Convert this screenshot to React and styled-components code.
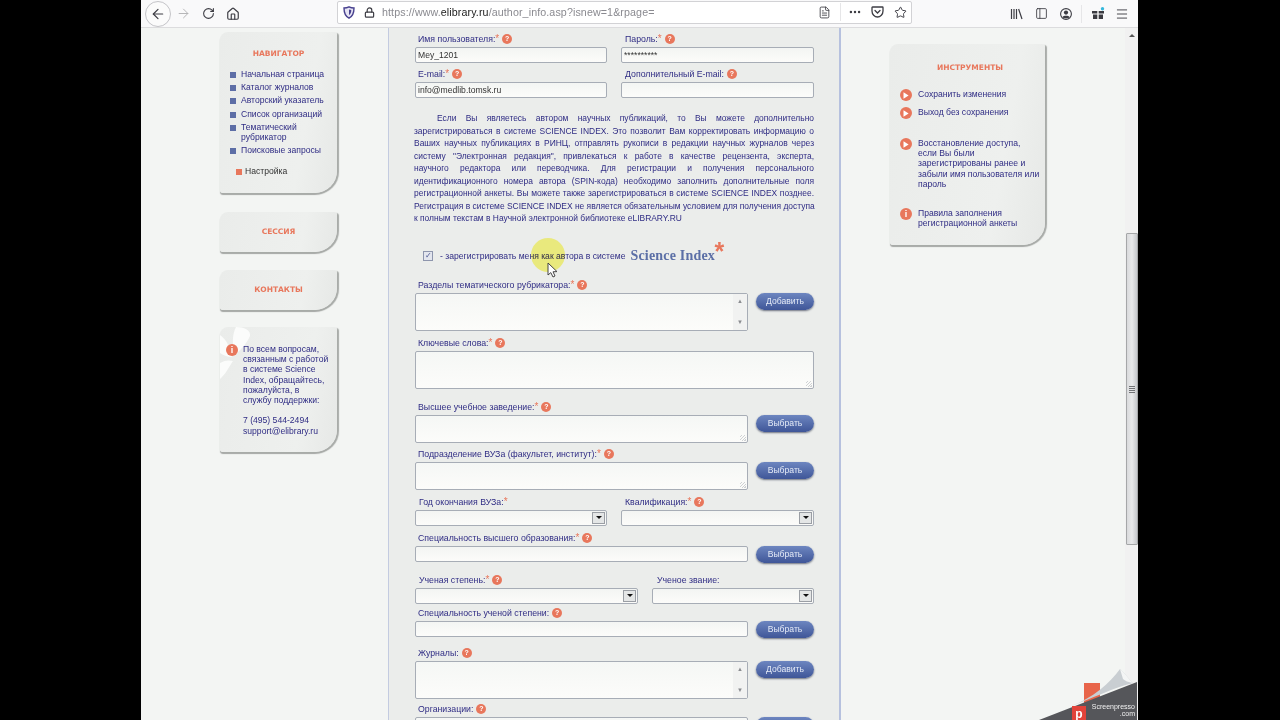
import React from 'react';
import styled, { createGlobalStyle } from 'styled-components';
import { ArrowLeft, ArrowRight, RotateCw, House, Lock, FileText, Ellipsis, Star, PanelLeft, Menu } from 'lucide-react';

const GlobalStyle = createGlobalStyle`
    html, body {
        margin: 0;
        padding: 0;
        background: #000;
        overflow: hidden;
    }
    * {
        box-sizing: border-box;
    }
`;

const NAVY = '#2f2c84';
const CORAL = '#e8775c';

const Screen = styled.div`
    width: 1280px;
    height: 720px;
    overflow: hidden;
    background: #000;
    padding: 0 142px 0 141px;
    font-family: "Liberation Sans", Arial, sans-serif;
`;

const Browser = styled.div`
    position: relative;
    width: 997px;
    height: 720px;
    display: flex;
    flex-direction: column;
    background: #f3f5f3;
    filter: blur(0.3px);
`;

/* browser chrome */
const Toolbar = styled.div`
    height: 28px;
    flex: none;
    display: flex;
    align-items: center;
    background: #f9f9fa;
    border-bottom: 1px solid #dcdcde;
    color: #3d3d44;
`;

const BackButton = styled.div`
    width: 26px;
    height: 26px;
    margin-left: 4px;
    flex: none;
    display: flex;
    align-items: center;
    justify-content: center;
    border: 1px solid #c4c4c8;
    border-radius: 50%;
    background: #fbfbfb;
`;

const ToolIcon = styled.div`
    width: ${p => p.$w || 24}px;
    margin-left: ${p => p.$ml || 0}px;
    flex: none;
    display: flex;
    align-items: center;
    justify-content: center;
    color: ${p => p.$color || 'inherit'};
`;

const UrlBar = styled.div`
    width: 575px;
    height: 23px;
    margin-left: 92px;
    margin-top: -3px;
    flex: none;
    display: flex;
    align-items: center;
    background: #fff;
    border: 1px solid #d2d2d5;
    border-radius: 2px;
`;

const UrlText = styled.div`
    width: 430px;
    flex: none;
    padding-left: 2px;
    font-size: 10.7px;
    color: #8a8a90;
    letter-spacing: 0.1px;
    white-space: nowrap;

    b {
        font-weight: 400;
        color: #222;
    }
`;

const ToolSep = styled.div`
    width: 1px;
    height: 18px;
    flex: none;
    margin-left: ${p => p.$ml || 0}px;
    background: #e6e6e8;
`;

/* page */
const Viewport = styled.div`
    flex: 1;
    min-height: 0;
    display: flex;
`;

const Page = styled.div`
    flex: 1;
    min-width: 0;
    display: flex;
    padding-left: 79px;
    overflow: hidden;
`;

const LeftCol = styled.div`
    width: 117px;
    flex: none;
    padding-top: 4px;
    display: flex;
    flex-direction: column;
`;

const RightCol = styled.div`
    width: 155px;
    flex: none;
    margin-left: 49px;
    padding-top: 16px;
`;

const Panel = styled.div`
    position: relative;
    overflow: hidden;
    height: ${p => p.$h}px;
    margin-top: ${p => p.$mt || 0}px;
    padding: ${p => p.$pad || '0'};
    background: linear-gradient(100deg, #eaecea 0%, #eef0ee 70%, #e6e8e6 100%);
    border-radius: 8px 3px 22px 3px;
    box-shadow: 2px 1px 1px #a9aca9, 0 2px 1px #a5a8a5;
    color: ${NAVY};
    font-size: 8.6px;
    line-height: 10.2px;
`;

const PanelTitle = styled.div`
    height: ${p => p.$h || 12}px;
    line-height: ${p => p.$h || 12}px;
    text-align: center;
    font-family: "DejaVu Sans", Verdana, sans-serif;
    font-size: 7.5px;
    font-weight: 700;
    color: ${CORAL};
`;

const NavList = styled.ul`
    list-style: none;
    margin: 9px 0 0;
    padding: 0 0 0 10px;
`;

const NavItem = styled.li`
    display: flex;
    margin-top: ${p => p.$mt ?? 3}px;
    padding-left: ${p => p.$indent || 0}px;
    color: ${p => p.$dark ? '#333' : NAVY};
`;

const NavBullet = styled.span`
    width: 6px;
    height: 6px;
    flex: none;
    margin: 3px ${p => p.$gap || 5}px 0 0;
    background: ${p => p.$red ? CORAL : '#5d6ea6'};
`;

const InfoBlock = styled.div`
    position: relative;
    display: flex;
    gap: ${p => p.$gap || 5}px;
    margin-top: ${p => p.$mt || 0}px;
`;

const InfoText = styled.div`
    min-width: 0;
`;

const Round = styled.span`
    width: 12px;
    height: 12px;
    flex: none;
    display: flex;
    align-items: center;
    justify-content: center;
    border-radius: 50%;
    background: ${CORAL};
    color: #fff;
    font-family: "Liberation Sans", Arial, sans-serif;
    font-size: 9px;
    font-weight: 700;
    line-height: 12px;
`;

const Petals = styled.svg`
    position: absolute;
    left: 0;
    top: 0;
`;

/* central form */
const Center = styled.div`
    width: 453px;
    flex: none;
    margin-left: 51px;
    padding: 4px 26px 0 26px;
    background: #ebedeb;
    border-left: 1px solid #c3cbe0;
    border-right: 2px solid #b6c1de;
`;

const Row = styled.div`
    display: flex;
    gap: ${p => p.$gap ?? 14}px;
    margin-top: ${p => p.$mt || 0}px;
`;

const Field = styled.div`
    width: ${p => p.$w ? `${p.$w}px` : 'auto'};
    flex: none;
`;

const Label = styled.div`
    height: 12px;
    margin-bottom: 2px;
    padding-left: ${p => p.$pl ?? 3}px;
    display: flex;
    align-items: center;
    gap: 3px;
    white-space: nowrap;
    font-size: 8.75px;
    line-height: 12px;
    color: ${NAVY};

    i {
        font-style: normal;
        font-size: 10px;
        color: ${CORAL};
        margin-left: -3px;
    }
`;

const Hint = styled.span`
    width: 10px;
    height: 10px;
    flex: none;
    display: flex;
    align-items: center;
    justify-content: center;
    border-radius: 50%;
    background: ${CORAL};
    color: #fff;
    font-size: 7px;
    font-weight: 700;
`;

const TextInput = styled.input`
    display: block;
    width: 100%;
    height: 16px;
    margin: 0;
    padding: 0 2px;
    border: 1px solid #a7adb6;
    border-radius: 2px;
    background: linear-gradient(#f3f5f3, #fcfcfa);
    font-family: "Liberation Sans", Arial, sans-serif;
    font-size: 8.6px;
    color: #333;
    outline: none;
`;

const TextArea = styled.textarea`
    display: block;
    width: 100%;
    height: ${p => p.$h}px;
    margin: 0;
    padding: 2px;
    border: 1px solid #a7adb6;
    border-radius: 2px;
    background: linear-gradient(#f5f7f5, #fcfcfa);
    outline: none;
    resize: none;
`;

const Grip = styled.span`
    position: absolute;
    right: 2px;
    bottom: 2px;
    width: 6px;
    height: 6px;
    background: repeating-linear-gradient(135deg, transparent 0 1px, #cfd2d4 1px 2px);
`;

const AreaWrap = styled.div`
    position: relative;
`;

const ListBox = styled.div`
    height: 38px;
    display: flex;
    justify-content: flex-end;
    border: 1px solid #a7adb6;
    border-radius: 2px;
    background: linear-gradient(#f5f7f5, #fcfcfa);
`;

const ListArrows = styled.div`
    width: 14px;
    padding: 4px 0;
    display: flex;
    flex-direction: column;
    justify-content: space-between;
    align-items: center;
    background: #f1f2f1;
    color: #8a8c90;
    font-size: 6px;
    line-height: 7px;
`;

const SelectBox = styled.div`
    height: 16px;
    padding: 1px;
    display: flex;
    justify-content: flex-end;
    border: 1px solid #a7adb6;
    border-radius: 2px;
    background: linear-gradient(#f3f5f3, #fcfcfa);
`;

const SelectArrow = styled.div`
    width: 13px;
    display: flex;
    align-items: center;
    justify-content: center;
    background: #e4e6e6;
    border: 1px solid #9a9ea4;

    &::after {
        content: '';
        border-style: solid;
        border-width: 3px 3px 0 3px;
        border-color: #111 transparent transparent transparent;
    }
`;

const ActionButton = styled.div`
    width: 58px;
    height: ${p => p.$h || 17}px;
    flex: none;
    display: flex;
    align-items: center;
    justify-content: center;
    border-radius: 9px;
    background: linear-gradient(#6d86c0, #3f5698);
    box-shadow: 0 1px 2px #6d7380;
    color: #e3e9f6;
    font-size: 8.6px;
`;

const Intro = styled.div`
    width: 400px;
    margin: 14px 0 0 -1px;
    font-size: 8.45px;
    line-height: 12.5px;
    color: ${NAVY};
`;

const IntroLine = styled.div`
    white-space: nowrap;
    text-align: justify;
    text-align-last: justify;
    padding-left: ${p => p.$indent || 0}px;

    &:last-child {
        text-align-last: left;
    }
`;

const CheckRow = styled.div`
    height: 20px;
    margin: 21px 0 0 8px;
    display: flex;
    align-items: center;
    font-size: 8.6px;
    color: ${NAVY};
    white-space: nowrap;
`;

const CheckBox = styled.span`
    width: 10px;
    height: 10px;
    flex: none;
    margin-right: 7px;
    display: flex;
    align-items: center;
    justify-content: center;
    border: 1px solid #8e96ad;
    background: #e3e6ee;
    color: #4a5590;
    font-size: 8px;
    line-height: 8px;
`;

const ScienceIndex = styled.span`
    position: relative;
    margin-left: 5px;
    font-family: "Liberation Serif", "Times New Roman", serif;
    font-size: 14px;
    font-weight: 700;
    letter-spacing: 0.2px;
    color: #5b6fa6;
`;

const Star2 = styled.span`
    position: absolute;
    left: 84px;
    top: -9px;
    font-family: "Liberation Sans", Arial, sans-serif;
    font-size: 25px;
    line-height: 25px;
    font-weight: 700;
    color: ${CORAL};
`;

/* scrollbar */
const ScrollBar = styled.div`
    width: 13px;
    flex: none;
    display: flex;
    flex-direction: column;
    align-items: center;
    background: #f1f1f1;
    color: #555;
`;

const ScrollArrow = styled.div`
    width: 0;
    height: 0;
    margin-top: 6px;
    border-style: solid;
    border-width: 0 3px 3px 3px;
    border-color: transparent transparent #555 transparent;
`;

const ScrollThumb = styled.div`
    width: 12px;
    height: 312px;
    margin-top: 196px;
    display: flex;
    align-items: center;
    justify-content: center;
    border: 1px solid #a5a7a8;
    border-radius: 1px;
    background: linear-gradient(90deg, #d9dadc 0%, #e8e9ea 50%, #c6c8cb 100%);
`;

const ThumbGrip = styled.div`
    width: 6px;
    height: 7px;
    background: repeating-linear-gradient(#707275 0 1px, transparent 1px 2px);
`;

/* things recorded over the page */
const CursorGlow = styled.div`
    position: absolute;
    left: 390px;
    top: 238px;
    width: 34px;
    height: 34px;
    border-radius: 50%;
    background: radial-gradient(circle, #fdfb88 0 75%, #fdfbb4 100%);
    mix-blend-mode: multiply;
`;

const Cursor = styled.svg`
    position: absolute;
    left: 406px;
    top: 262px;
`;

const Watermark = styled.svg`
    position: absolute;
    right: 0;
    bottom: 0;
`;

const Question = () => <Hint>?</Hint>;

const Req = () => <i>*</i>;

const Play = () => (
    <Round>
        <svg width="6" height="7" viewBox="0 0 6 7"><path d="M0.5 0.3 L5.6 3.5 L0.5 6.7 Z" fill="#fff" /></svg>
    </Round>
);

const NAV_ITEMS = ['Начальная страница', 'Каталог журналов', 'Авторский указатель', 'Список организаций', 'Тематический рубрикатор', 'Поисковые запросы'];

const INTRO_LINES = [
    'Если Вы являетесь автором научных публикаций, то Вы можете дополнительно',
    'зарегистрироваться в системе SCIENCE INDEX. Это позволит Вам корректировать информацию о',
    'Ваших научных публикациях в РИНЦ, отправлять рукописи в редакции научных журналов через',
    'систему "Электронная редакция", привлекаться к работе в качестве рецензента, эксперта,',
    'научного редактора или переводчика. Для регистрации и получения персонального',
    'идентификационного номера автора (SPIN-кода) необходимо заполнить дополнительные поля',
    'регистрационной анкеты. Вы можете также зарегистрироваться в системе SCIENCE INDEX позднее.',
    'Регистрация в системе SCIENCE INDEX не является обязательным условием для получения доступа',
    'к полным текстам в Научной электронной библиотеке eLIBRARY.RU',
];

const ToolbarBar = () => (
    <Toolbar>
        <BackButton><ArrowLeft size={16} strokeWidth={1.8} /></BackButton>
        <ToolIcon $color="#b1b1b3"><ArrowRight size={15} strokeWidth={1.5} /></ToolIcon>
        <ToolIcon $w={26}><RotateCw size={13} strokeWidth={2} /></ToolIcon>
        <ToolIcon><House size={14} strokeWidth={2} /></ToolIcon>
        <UrlBar>
            <ToolIcon $w={21}>
                <svg width="12" height="13" viewBox="0 0 12 13">
                    <path d="M6 .8 C7.6 1.6 9.4 2 11 2 C11 7 9.6 10.4 6 12.2 C2.4 10.4 1 7 1 2 C2.6 2 4.4 1.6 6 .8 Z" fill="#e6e4f4" stroke="#48418f" strokeWidth="1.4" />
                    <path d="M6 3.5 C6.8 3.8 7.5 4 8.3 4 C8.3 6.5 7.6 8 6 9 Z" fill="#48418f" />
                </svg>
            </ToolIcon>
            <ToolIcon $w={21}><Lock size={11} strokeWidth={2.6} /></ToolIcon>
            <UrlText>https://www.<b>elibrary.ru</b>/author_info.asp?isnew=1&amp;rpage=</UrlText>
            <ToolIcon $w={14} $ml={7}><FileText size={13} strokeWidth={1.6} /></ToolIcon>
            <ToolSep $ml={9} />
            <ToolIcon $w={22} $ml={3}><Ellipsis size={14} strokeWidth={2.2} /></ToolIcon>
            <ToolIcon $w={22}>
                <svg width="13" height="12" viewBox="0 0 13 12" fill="none" stroke="#3d3d44" strokeWidth="1.3">
                    <path d="M1.5 1 H11.5 Q12 1 12 1.6 V5 C12 8.4 9.4 11 6.5 11 C3.6 11 1 8.4 1 5 V1.6 Q1 1 1.5 1 Z" />
                    <path d="M4 4.5 L6.5 7 L9 4.5" strokeLinecap="round" />
                </svg>
            </ToolIcon>
            <ToolIcon $w={22} $ml={1}><Star size={13} strokeWidth={1.8} /></ToolIcon>
        </UrlBar>
        <ToolIcon $w={14} $ml={97}>
            <svg width="13" height="12" viewBox="0 0 13 12" fill="none" stroke="#3d3d44" strokeWidth="1.2">
                <path d="M1.5 1 V11 M4 1 V11 M6.5 1 V11 M8.6 1 L12 11" />
            </svg>
        </ToolIcon>
        <ToolIcon $w={14} $ml={11}><PanelLeft size={13} strokeWidth={1.6} /></ToolIcon>
        <ToolIcon $w={14} $ml={11}>
            <svg width="12" height="12" viewBox="0 0 12 12">
                <circle cx="6" cy="6" r="5.4" fill="none" stroke="#3d3d44" strokeWidth="1.1" />
                <circle cx="6" cy="4.6" r="2.1" fill="#3d3d44" />
                <path d="M2.4 9.2 C3.4 7.4 8.6 7.4 9.6 9.2 C8.4 10.6 3.6 10.6 2.4 9.2 Z" fill="#3d3d44" />
            </svg>
        </ToolIcon>
        <ToolSep $ml={8} />
        <ToolIcon $w={14} $ml={9}>
            <svg width="14" height="13" viewBox="0 0 14 13">
                <path d="M1 4 H6.3 V6.6 H1 Z M7.7 4 H13 V6.6 H7.7 Z M2 7.6 H6.3 V12 H2 Z M7.7 7.6 H12 V12 H7.7 Z" fill="#3a3a40" />
                <circle cx="11.5" cy="1.8" r="1.7" fill="#35b8dc" />
            </svg>
        </ToolIcon>
        <ToolIcon $w={14} $ml={10}><Menu size={14} strokeWidth={1.6} /></ToolIcon>
    </Toolbar>
);

const NavColumn = () => (
    <LeftCol>
        <Panel $h={161} $pad="16px 0 0">
            <PanelTitle>НАВИГАТОР</PanelTitle>
            <NavList>
                {NAV_ITEMS.map((item, i) => (
                    <NavItem key={item} $mt={i === 0 ? 0 : 3}>
                        <NavBullet />
                        <span>{item}</span>
                    </NavItem>
                ))}
                <NavItem $mt={11} $indent={6} $dark>
                    <NavBullet $red $gap={3} />
                    <span>Настройка</span>
                </NavItem>
            </NavList>
        </Panel>
        <Panel $h={40} $mt={19} $pad="14px 0 0"><PanelTitle>СЕССИЯ</PanelTitle></Panel>
        <Panel $h={40} $mt={18} $pad="14px 0 0"><PanelTitle>КОНТАКТЫ</PanelTitle></Panel>
        <Panel $h={125} $mt={17} $pad="17px 8px 0 6px">
            <Petals width="50" height="60" viewBox="0 0 50 60" fill="#fbfcfb">
                <path d="M16 0 C24 0 31 3 30 9 C26 18 20 23 15 28 C12 18 12 8 16 0 Z" />
                <path d="M0 8 C6 12 10 20 12 30 C7 30 3 28 0 26 Z" />
                <path d="M0 36 C5 33 9 33 13 34 C9 40 5 48 0 52 Z" />
            </Petals>
            <InfoBlock $gap={5}>
                <Round>i</Round>
                <InfoText>
                    По всем вопросам,<br />
                    связанным с работой<br />
                    в системе Science<br />
                    Index, обращайтесь,<br />
                    пожалуйста, в<br />
                    службу поддержки:
                    <br /><br />
                    7 (495) 544-2494<br />
                    support@elibrary.ru
                </InfoText>
            </InfoBlock>
        </Panel>
    </LeftCol>
);

const ToolsColumn = () => (
    <RightCol>
        <Panel $h={201} $pad="18px 5px 0 10px">
            <PanelTitle>ИНСТРУМЕНТЫ</PanelTitle>
            <InfoBlock $gap={6} $mt={15}><Play /><InfoText>Сохранить изменения</InfoText></InfoBlock>
            <InfoBlock $gap={6} $mt={6}><Play /><InfoText>Выход без сохранения</InfoText></InfoBlock>
            <InfoBlock $gap={6} $mt={19}><Play /><InfoText>Восстановление доступа, если Вы были зарегистрированы ранее и забыли имя пользователя или пароль</InfoText></InfoBlock>
            <InfoBlock $gap={6} $mt={19}><Round>i</Round><InfoText>Правила заполнения регистрационной анкеты</InfoText></InfoBlock>
        </Panel>
    </RightCol>
);

const Picker = ({ h }) => (
    <AreaWrap>
        <TextArea $h={h} readOnly />
        <Grip />
    </AreaWrap>
);

const List = () => (
    <ListBox>
        <ListArrows><span>▲</span><span>▼</span></ListArrows>
    </ListBox>
);

const App = () => {
    return (
        <Screen>
            <GlobalStyle />
            <Browser>
                <ToolbarBar />
                <Viewport>
                    <Page>
                        <NavColumn />
                        <Center>
                            <Row $mt={1}>
                                <Field $w={192}>
                                    <Label>Имя пользователя:<Req /> <Question /></Label>
                                    <TextInput readOnly value="Mey_1201" />
                                </Field>
                                <Field $w={193}>
                                    <Label $pl={4}>Пароль:<Req /> <Question /></Label>
                                    <TextInput readOnly value="**********" />
                                </Field>
                            </Row>
                            <Row $mt={5}>
                                <Field $w={192}>
                                    <Label>E-mail:<Req /> <Question /></Label>
                                    <TextInput readOnly value="info@medlib.tomsk.ru" />
                                </Field>
                                <Field $w={193}>
                                    <Label $pl={4}>Дополнительный E-mail: <Question /></Label>
                                    <TextInput readOnly />
                                </Field>
                            </Row>
                            <Intro>
                                {INTRO_LINES.map((line, i) => (
                                    <IntroLine key={line} $indent={i === 0 ? 23 : 0}>{line}</IntroLine>
                                ))}
                            </Intro>
                            <CheckRow>
                                <CheckBox>✓</CheckBox>
                                - зарегистрировать меня как автора в системе
                                <ScienceIndex>Science Index<Star2>*</Star2></ScienceIndex>
                            </CheckRow>
                            <Row $mt={13} $gap={8}>
                                <Field $w={333}>
                                    <Label>Разделы тематического рубрикатора:<Req /> <Question /></Label>
                                    <List />
                                </Field>
                                <Field><Label /><ActionButton>Добавить</ActionButton></Field>
                            </Row>
                            <Row $mt={6}>
                                <Field $w={399}>
                                    <Label>Ключевые слова:<Req /> <Question /></Label>
                                    <Picker h={38} />
                                </Field>
                            </Row>
                            <Row $mt={12} $gap={8}>
                                <Field $w={333}>
                                    <Label>Высшее учебное заведение:<Req /> <Question /></Label>
                                    <Picker h={28} />
                                </Field>
                                <Field><Label /><ActionButton>Выбрать</ActionButton></Field>
                            </Row>
                            <Row $mt={5} $gap={8}>
                                <Field $w={333}>
                                    <Label>Подразделение ВУЗа (факультет, институт):<Req /> <Question /></Label>
                                    <Picker h={28} />
                                </Field>
                                <Field><Label /><ActionButton>Выбрать</ActionButton></Field>
                            </Row>
                            <Row $mt={6}>
                                <Field $w={192}>
                                    <Label $pl={4}>Год окончания ВУЗа:<Req /></Label>
                                    <SelectBox><SelectArrow /></SelectBox>
                                </Field>
                                <Field $w={193}>
                                    <Label $pl={4}>Квалификация:<Req /> <Question /></Label>
                                    <SelectBox><SelectArrow /></SelectBox>
                                </Field>
                            </Row>
                            <Row $mt={6} $gap={8}>
                                <Field $w={333}>
                                    <Label>Специальность высшего образования:<Req /> <Question /></Label>
                                    <TextInput readOnly />
                                </Field>
                                <Field><Label /><ActionButton>Выбрать</ActionButton></Field>
                            </Row>
                            <Row $mt={11}>
                                <Field $w={223}>
                                    <Label $pl={4}>Ученая степень:<Req /> <Question /></Label>
                                    <SelectBox><SelectArrow /></SelectBox>
                                </Field>
                                <Field $w={162}>
                                    <Label $pl={5}>Ученое звание:</Label>
                                    <SelectBox><SelectArrow /></SelectBox>
                                </Field>
                            </Row>
                            <Row $mt={3} $gap={8}>
                                <Field $w={333}>
                                    <Label>Специальность ученой степени: <Question /></Label>
                                    <TextInput readOnly />
                                </Field>
                                <Field><Label /><ActionButton>Выбрать</ActionButton></Field>
                            </Row>
                            <Row $mt={9} $gap={8}>
                                <Field $w={333}>
                                    <Label>Журналы: <Question /></Label>
                                    <List />
                                </Field>
                                <Field><Label /><ActionButton>Добавить</ActionButton></Field>
                            </Row>
                            <Row $mt={4} $gap={8}>
                                <Field $w={333}>
                                    <Label>Организации: <Question /></Label>
                                    <ListBox />
                                </Field>
                                <Field><Label /><ActionButton /></Field>
                            </Row>
                        </Center>
                        <ToolsColumn />
                    </Page>
                    <ScrollBar>
                        <ScrollArrow />
                        <ScrollThumb><ThumbGrip /></ScrollThumb>
                    </ScrollBar>
                </Viewport>
                <CursorGlow />
                <Cursor width="11" height="16" viewBox="0 0 11 16">
                    <path d="M1 1 V13 L3.8 10.6 L6 15 L8 14 L6 9.8 L10 9.6 Z" fill="#fff" stroke="#444" strokeWidth="1" />
                </Cursor>
                <Watermark width="100" height="52" viewBox="0 0 100 52">
                    <rect x="46" y="15" width="16" height="20" fill="#e8654a" />
                    <path d="M1 52 L99 14 V52 Z" fill="#55565a" />
                    <path d="M33 38 C55 30 72 15 82 1 C86 4 90 10 95 15 C75 20 55 30 33 38 Z" fill="#c9ced2" />
                    <path d="M82 1 C86 4 90 10 95 15 C90 14 87 13 85 11 C84 8 83 4 82 1 Z" fill="#f4f5f5" />
                    <rect x="34" y="38" width="14" height="14" fill="#e2433a" />
                    <text x="41" y="50" textAnchor="middle" fontFamily="Liberation Sans, sans-serif" fontSize="12" fontWeight="700" fill="#fff">p</text>
                    <text x="97" y="41" textAnchor="end" fontFamily="Liberation Sans, sans-serif" fontSize="7" fill="#f1f1f1">Screenpresso</text>
                    <text x="97" y="48" textAnchor="end" fontFamily="Liberation Sans, sans-serif" fontSize="7" fill="#f1f1f1">.com</text>
                </Watermark>
            </Browser>
        </Screen>
    );
};

export default App;
